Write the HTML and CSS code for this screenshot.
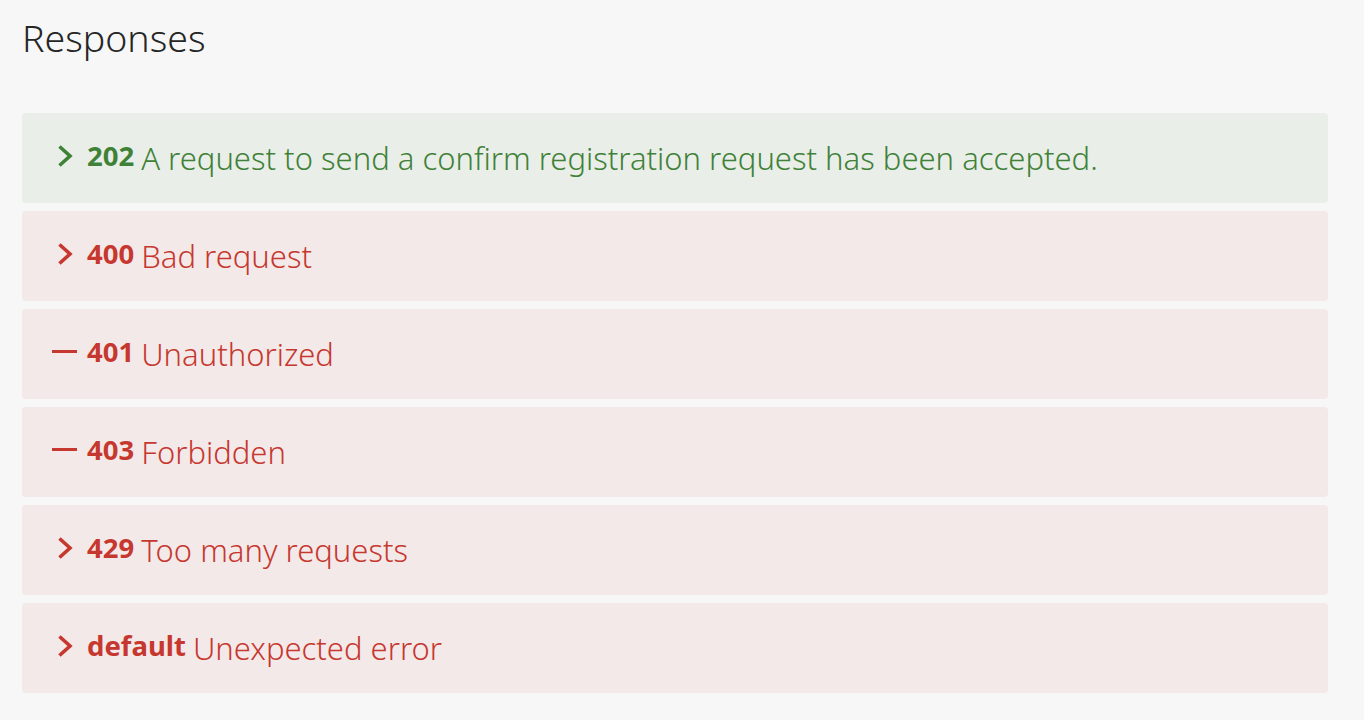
FILE: index.html
```html
<!DOCTYPE html>
<html>
<head>
<meta charset="utf-8">
<link rel="stylesheet" href="styles.css">
</head>
<body>
<section class="responses">
  <h3 class="title">Responses</h3>
  <div class="list">
    <div class="resp success">
      <svg class="icon" viewBox="0 0 17 24" width="17" height="24"><path d="M2.5 2.5 L13 12 L2.5 21.5" fill="none" stroke="currentColor" stroke-width="3.6"/></svg>
      <strong class="code">202</strong>
      <span class="desc">A request to send a confirm registration request has been accepted.</span>
    </div>
    <div class="resp error">
      <svg class="icon" viewBox="0 0 17 24" width="17" height="24"><path d="M2.5 2.5 L13 12 L2.5 21.5" fill="none" stroke="currentColor" stroke-width="3.6"/></svg>
      <strong class="code">400</strong>
      <span class="desc">Bad request</span>
    </div>
    <div class="resp error">
      <span class="dash"></span>
      <strong class="code">401</strong>
      <span class="desc">Unauthorized</span>
    </div>
    <div class="resp error">
      <span class="dash"></span>
      <strong class="code">403</strong>
      <span class="desc">Forbidden</span>
    </div>
    <div class="resp error">
      <svg class="icon" viewBox="0 0 17 24" width="17" height="24"><path d="M2.5 2.5 L13 12 L2.5 21.5" fill="none" stroke="currentColor" stroke-width="3.6"/></svg>
      <strong class="code">429</strong>
      <span class="desc">Too many requests</span>
    </div>
    <div class="resp error">
      <svg class="icon" viewBox="0 0 17 24" width="17" height="24"><path d="M2.5 2.5 L13 12 L2.5 21.5" fill="none" stroke="currentColor" stroke-width="3.6"/></svg>
      <strong class="code">default</strong>
      <span class="desc">Unexpected error</span>
    </div>
  </div>
</section>
</body>
</html>
```
FILE: styles.css
```css
html, body {
  margin: 0;
  padding: 0;
  background: #f7f7f7;
}
body {
  font-family: "Noto Sans", sans-serif;
}
.responses {
  padding: 14px 36px 0 22px;
}
.title {
  margin: 0 0 0 0;
  font-weight: 300;
  font-size: 37.5px;
  line-height: 48px;
  color: #262626;
}
.list {
  margin-top: 51px;
  display: flex;
  flex-direction: column;
  gap: 8px;
}
.resp {
  height: 90px;
  border-radius: 4px;
  display: flex;
  align-items: center;
  padding-left: 34px;
  box-sizing: border-box;
}
.success {
  background: #e9eee9;
  color: #3f8137;
}
.error {
  background: #f4e9e9;
  color: #c6382f;
}
.icon {
  flex: none;
  margin-left: 1px;
  margin-right: 13px;
  position: relative;
  top: -2px;
}
.dash {
  flex: none;
  width: 25px;
  height: 3px;
  background: currentColor;
  margin-left: -4px;
  margin-right: 10px;
  position: relative;
  top: -3px;
}
.code {
  font-weight: 700;
  font-size: 27.5px;
  margin-right: 7px;
  position: relative;
  top: -3px;
}
.desc {
  font-size: 31px;
  font-weight: 300;
}
```
